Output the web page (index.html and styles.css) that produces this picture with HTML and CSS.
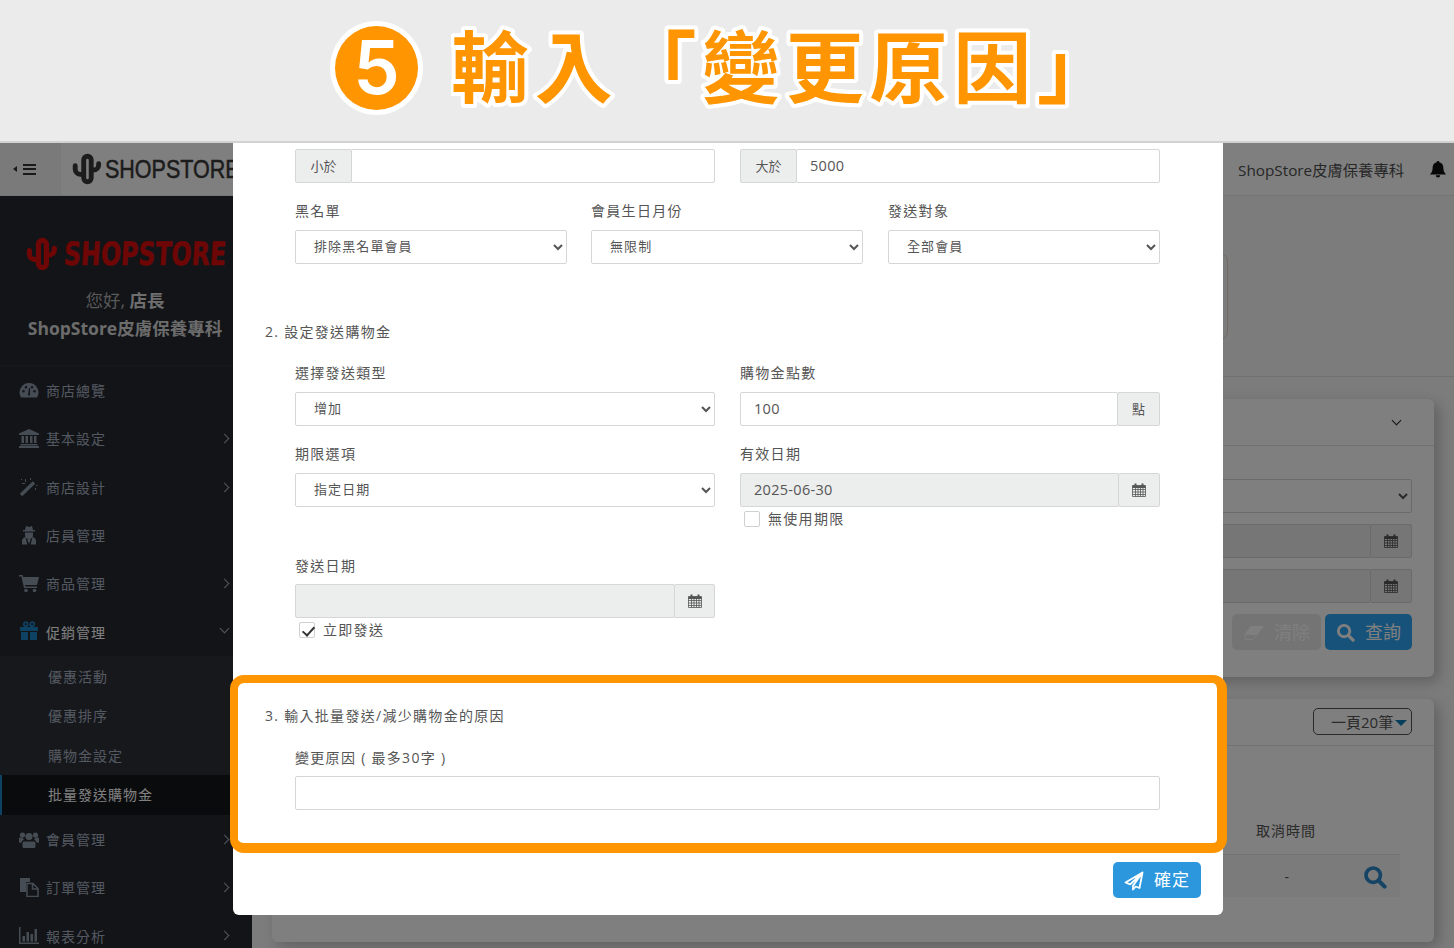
FILE: index.html
```html
<!DOCTYPE html>
<html lang="zh-Hant">
<head>
    <meta charset="UTF-8">
    <title>批量發送購物金</title>
    <link rel="stylesheet" href="styles.css">
</head>
<body>
    <svg class="defs" width="0" height="0">
        <symbol id="i-logo" viewBox="0 0 30 30"><path fill="none" stroke="currentColor" stroke-width="4.6" stroke-linecap="round" d="M3 12v3a5 5 0 0 0 5 5h3M11 6.500a3.300 3.300 0 0 1 7 0v17a3.300 3.300 0 0 1-7 0zM18 16h2a5 5 0 0 0 5-5v-1"/></symbol>
        <symbol id="i-tacho" viewBox="0 0 20 20"><path fill="currentColor" fill-rule="evenodd" d="M10 3a9.500 9.500 0 0 0-8 14.500h16A9.500 9.500 0 0 0 10 3zM4.500 12.500a1.300 1.300 0 1 0 0-2.600 1.300 1.300 0 0 0 0 2.600zM7 8.500a1.300 1.300 0 1 0 0-2.600 1.300 1.300 0 0 0 0 2.600zM13 8.500a1.300 1.300 0 1 0 0-2.600 1.300 1.300 0 0 0 0 2.600zM15.500 12.500a1.300 1.300 0 1 0 0-2.600 1.300 1.300 0 0 0 0 2.600zM9 15.500h2L11 8h-1z"/></symbol>
        <symbol id="i-bank" viewBox="0 0 20 20"><path fill="currentColor" d="M10 1 0 5.500V7h20V5.500zM2.500 8H5v7H2.500zM6.500 8H9v7H6.500zM11 8h2.500v7H11zM15 8h2.500v7H15zM1.500 16h17v1.500h-17zM0 18h20v2H0z"/></symbol>
        <symbol id="i-magic" viewBox="0 0 20 20"><path fill="none" stroke="currentColor" stroke-width="3.400" d="M2 18 15 5.500"/><path fill="currentColor" d="M6 2h1v3H6zM3 6h3v1H3zM11 1h1v2h-1zM16 11h1v2h-1zM2 2h1v1H2zM17 8h1.500v1H17z"/></symbol>
        <symbol id="i-secret" viewBox="0 0 20 20"><path fill="currentColor" d="M6 5 7 1l3 1 3-1 1 4h2v1.500H4V5zM6 7.500h8V10a4 4 0 0 1-8 0zM3 19.500V16c0-2 1.500-3.500 3.500-4l1.800 7.500zM17 19.500V16c0-2-1.500-3.500-3.500-4l-1.800 7.500zM9 13h2l.5 2-1.500 4-1.500-4z"/></symbol>
        <symbol id="i-cart" viewBox="0 0 20 20"><path fill="currentColor" d="M0 2h3.500l.6 2H20l-2 8H6l.3 1.500H18V15H5L2.400 3.500H0z"/><circle fill="currentColor" cx="7" cy="17.500" r="1.800"/><circle fill="currentColor" cx="15.500" cy="17.500" r="1.800"/></symbol>
        <symbol id="i-gift" viewBox="0 0 20 20"><path fill="currentColor" d="M1 6h18v4H1zM2 11h7v8H2zM11 11h7v8h-7z"/><circle fill="none" stroke="currentColor" stroke-width="1.800" cx="6.800" cy="3.200" r="2"/><circle fill="none" stroke="currentColor" stroke-width="1.800" cx="13.200" cy="3.200" r="2"/></symbol>
        <symbol id="i-users" viewBox="0 0 20 20"><circle fill="currentColor" cx="10" cy="7.500" r="3.600"/><circle fill="currentColor" cx="3.500" cy="6" r="2.600"/><circle fill="currentColor" cx="16.500" cy="6" r="2.600"/><path fill="currentColor" d="M5 12.500h10c1 0 1.500 1 1.500 2.500v2.500c0 .8-.7 1.500-1.500 1.500H5c-.8 0-1.500-.7-1.500-1.500V15c0-1.500.5-2.500 1.500-2.500zM0 9.500c0-.6.600-1 1-1h2.500c.4 1 1 1.700 1.500 2.300-1.600.5-2.400 1.700-2.500 3H1c-.5 0-1-.4-1-1zM20 9.500c0-.6-.6-1-1-1h-2.500c-.4 1-1 1.700-1.500 2.300 1.600.5 2.400 1.700 2.500 3H19c.5 0 1-.4 1-1z"/></symbol>
        <symbol id="i-files" viewBox="0 0 20 20"><path fill="currentColor" d="M1 1h10v4H7v10H1z"/><path fill="none" stroke="currentColor" stroke-width="1.500" d="M8 6.500h6l5 5v8H8zM13.500 6.500v5.500H19"/></symbol>
        <symbol id="i-chart" viewBox="0 0 20 20"><path fill="currentColor" d="M0 2h1.500v15.500H20V19H0zM3.500 11H6v5.500H3.500zM7.500 7H10v9.500H7.500zM11.500 9H14v7.500h-2.500zM15.500 4H18v12.500h-2.500z"/></symbol>
        <symbol id="i-bell" viewBox="0 0 20 20"><path fill="currentColor" d="M10 1a1.500 1.500 0 0 0-1.500 1.600C5.500 3.300 4 5.600 4 9c0 3.500-1 5-3 7h18c-2-2-3-3.500-3-7 0-3.400-1.500-5.700-4.500-6.400A1.500 1.500 0 0 0 10 1zM7.500 17a2.500 2.500 0 0 0 5 0z"/></symbol>
        <symbol id="i-cal" viewBox="0 0 14 14"><path fill="none" stroke="currentColor" stroke-width=".8" d="M.5 2.500h13v11H.5zM.5 6.500h13M.5 9h13M.5 11.500h13M3.500 5v8.500M6 5v8.500M8.500 5v8.500M11 5v8.500"/><path fill="currentColor" d="M.5 2.500h13V5H.5zM2.500 .5h2v3h-2zM9.500 .5h2v3h-2z"/></symbol>
        <symbol id="i-search" viewBox="0 0 20 20"><circle fill="none" stroke="currentColor" stroke-width="3" cx="8.500" cy="8.500" r="6"/><path fill="none" stroke="currentColor" stroke-width="3.400" stroke-linecap="round" d="m13.500 13.500 4.500 4.500"/></symbol>
        <symbol id="i-eraser" viewBox="0 0 20 14"><path fill="currentColor" d="M6.500 0H20l-6 8H1z"/><path fill="none" stroke="currentColor" d="M1 8.500h12L9 13.500H1z"/></symbol>
        <symbol id="i-plane" viewBox="0 0 20 20"><path fill="none" stroke="currentColor" stroke-width="1.800" stroke-linejoin="round" d="M18.500 1.500 1.500 11.500l4.700 1.900L18.500 1.500 9 14.600v3.900l2.700-3 3.800 1.500z"/></symbol>
    </svg>

    <header class="banner">
        <div class="step">5</div>
        <h1 class="banner-title"><svg width="690" height="130"><text x="0" y="92">輸入「變更原因」</text></svg></h1>
    </header>

    <div class="app">
        <aside class="sidebar">
            <div class="profile">
                <div class="side-logo">
                    <svg class="side-logo-mark"><use href="#i-logo"/></svg>
                    <span class="side-logo-text">SHOPSTORE</span>
                </div>
                <div class="hello">您好, <b>店長</b></div>
                <div class="shop-name">ShopStore皮膚保養專科</div>
            </div>
            <ul class="menu">
                <li class="menu-item"><svg class="ico"><use href="#i-tacho"/></svg>商店總覽</li>
                <li class="menu-item more"><svg class="ico"><use href="#i-bank"/></svg>基本設定</li>
                <li class="menu-item more"><svg class="ico"><use href="#i-magic"/></svg>商店設計</li>
                <li class="menu-item"><svg class="ico"><use href="#i-secret"/></svg>店員管理</li>
                <li class="menu-item more"><svg class="ico"><use href="#i-cart"/></svg>商品管理</li>
                <li class="menu-item open"><svg class="ico"><use href="#i-gift"/></svg>促銷管理</li>
                <li class="submenu">
                    <div class="sub-item">優惠活動</div>
                    <div class="sub-item">優惠排序</div>
                    <div class="sub-item">購物金設定</div>
                    <div class="sub-item active">批量發送購物金</div>
                </li>
                <li class="menu-item more"><svg class="ico"><use href="#i-users"/></svg>會員管理</li>
                <li class="menu-item more"><svg class="ico"><use href="#i-files"/></svg>訂單管理</li>
                <li class="menu-item more"><svg class="ico"><use href="#i-chart"/></svg>報表分析</li>
            </ul>
        </aside>

        <div class="page">
            <div class="topbar">
                <div class="toggle"><span class="toggle-arrow"></span><span class="toggle-bars"></span></div>
                <div class="top-logo">
                    <svg class="top-logo-mark"><use href="#i-logo"/></svg>
                    <span class="top-logo-text">SHOPSTORE</span>
                </div>
                <div class="top-shop">ShopStore皮膚保養專科</div>
                <svg class="top-bell"><use href="#i-bell"/></svg>
            </div>
            <div class="main">
                <div class="page-head"><div class="notice"></div></div>

                <section class="card card-search">
                    <div class="card-head"><span class="chevron"></span></div>
                    <div class="card-form">
                        <select class="control"><option></option></select>
                        <div class="group"><div class="control readonly"></div><span class="addon addon-cal"><svg class="cal"><use href="#i-cal"/></svg></span></div>
                        <div class="group"><div class="control readonly"></div><span class="addon addon-cal"><svg class="cal"><use href="#i-cal"/></svg></span></div>
                        <div class="card-actions">
                            <button class="btn btn-clear"><svg class="btn-eraser"><use href="#i-eraser"/></svg>清除</button>
                            <button class="btn btn-query"><svg class="btn-search"><use href="#i-search"/></svg>查詢</button>
                        </div>
                    </div>
                </section>

                <section class="card card-list">
                    <div class="card-head">
                        <div class="per-page">一頁20筆<span class="caret"></span></div>
                    </div>
                    <div class="list-title"><span class="col-time">取消時間</span></div>
                    <div class="list-row">
                        <span class="col-time">-</span>
                        <svg class="row-search"><use href="#i-search"/></svg>
                    </div>
                </section>
            </div>
        </div>

        <div class="backdrop"></div>

        <div class="modal">
            <div class="grid-2">
                <div class="group"><span class="addon addon-left">小於</span><div class="control"></div></div>
                <div class="group"><span class="addon addon-left">大於</span><div class="control">5000</div></div>
            </div>

            <div class="grid-3">
                <div class="field">
                    <label>黑名單</label>
                    <select class="control"><option>排除黑名單會員</option></select>
                </div>
                <div class="field">
                    <label>會員生日月份</label>
                    <select class="control"><option>無限制</option></select>
                </div>
                <div class="field">
                    <label>發送對象</label>
                    <select class="control"><option>全部會員</option></select>
                </div>
            </div>

            <h4 class="step-title step-two">2. 設定發送購物金</h4>

            <div class="grid-2 row-type">
                <div class="field">
                    <label>選擇發送類型</label>
                    <select class="control"><option>增加</option></select>
                </div>
                <div class="field">
                    <label>購物金點數</label>
                    <div class="group"><div class="control">100</div><span class="addon addon-point">點</span></div>
                </div>
            </div>

            <div class="grid-2 row-term">
                <div class="field">
                    <label>期限選項</label>
                    <select class="control"><option>指定日期</option></select>
                </div>
                <div class="field">
                    <label>有效日期</label>
                    <div class="group"><div class="control readonly">2025-06-30</div><span class="addon addon-cal"><svg class="cal"><use href="#i-cal"/></svg></span></div>
                    <div class="check-line"><span class="check"></span>無使用期限</div>
                </div>
            </div>

            <div class="grid-2 row-send">
                <div class="field">
                    <label>發送日期</label>
                    <div class="group"><div class="control readonly"></div><span class="addon addon-cal addon-narrow"><svg class="cal"><use href="#i-cal"/></svg></span></div>
                    <div class="check-line"><span class="check checked"></span>立即發送</div>
                </div>
            </div>

            <div class="highlight">
                <h4 class="step-title">3. 輸入批量發送/減少購物金的原因</h4>
                <div class="field reason">
                    <label>變更原因 ( 最多30字 )</label>
                    <div class="control"></div>
                </div>
            </div>

            <div class="modal-foot">
                <button class="btn btn-send"><svg class="btn-plane"><use href="#i-plane"/></svg>確定</button>
            </div>
        </div>
    </div>
</body>
</html>
```

FILE: styles.css
```css
* {
    box-sizing: border-box;
}

html, body {
    margin: 0;
    height: 948px;
    overflow: hidden;
}

body {
    font-family: "Open Sans", "Noto Sans CJK TC", sans-serif;
    font-size: 14px;
    color: #555;
    letter-spacing: 1px;
}

.defs {
    position: absolute;
}

/* top banner */
.banner {
    height: 143px;
    background: #ebebeb;
    border-bottom: 2px solid #d2d2d2;
    display: flex;
    align-items: center;
    padding-left: 330px;
}

.step {
    width: 93px;
    height: 94px;
    margin-top: -6px;
    border: 5px solid #fff;
    border-radius: 50%;
    background: #ff9500;
    color: #fff;
    font-family: Inter, sans-serif;
    font-size: 74px;
    font-weight: 600;
    line-height: 82px;
    text-align: center;
    letter-spacing: 0;
}

.banner-title {
    height: 130px;
    margin: -1px 0 0 28px;
}

.banner-title text {
    font-family: "Noto Sans CJK TC", sans-serif;
    font-size: 78px;
    font-weight: 700;
    letter-spacing: 5.7px;
    fill: #ff9500;
    stroke: #fff;
    stroke-width: 8px;
    stroke-linejoin: round;
    paint-order: stroke fill;
}

/* app shell */
.app {
    position: relative;
    display: flex;
    height: 805px;
    overflow: hidden;
    background: #f8f8f8;
}

.backdrop {
    position: absolute;
    inset: 0;
    background: rgba(0, 0, 0, .5);
}

/* sidebar */
.sidebar {
    width: 252px;
    flex: none;
    background: #25282f;
    color: #a7b1c2;
}

.profile {
    height: 223px;
    padding-top: 94px;
    border-bottom: 1px solid #2e3138;
    text-align: center;
}

.side-logo {
    display: flex;
    align-items: center;
    height: 34px;
    padding-left: 26px;
    color: #dc0c0c;
}

.side-logo-mark {
    width: 34px;
    height: 34px;
    flex: none;
}

.side-logo-text {
    margin-left: 4px;
    font-family: "DejaVu Sans", sans-serif;
    font-size: 32px;
    font-weight: 700;
    letter-spacing: 0;
    -webkit-text-stroke: .6px #dc0c0c;
    white-space: nowrap;
    transform: scaleX(.74) skewX(-5deg);
    transform-origin: left center;
}

.hello {
    margin-top: 17px;
    margin-right: 2px;
    font-size: 17.5px;
    line-height: 24px;
    letter-spacing: 0;
    color: #b0b0b0;
}

.hello b {
    font-weight: 700;
    color: #dcdcdc;
}

.shop-name {
    margin-top: 3px;
    margin-right: 2px;
    font-size: 17.5px;
    font-weight: 700;
    line-height: 26px;
    letter-spacing: 0;
    color: #d8d8d8;
}

.menu {
    list-style: none;
    margin: 0;
    padding: 0;
}

.menu-item {
    position: relative;
    display: flex;
    align-items: center;
    height: 48.3px;
    padding-left: 46px;
}

.ico {
    position: absolute;
    left: 19px;
    top: 14px;
    width: 20px;
    height: 20px;
    color: #8d99a8;
}

.more::after,
.open::after {
    content: "";
    position: absolute;
    right: 24px;
    top: 21px;
    width: 6px;
    height: 6px;
    border-top: 1px solid #a7b1c2;
    border-right: 1px solid #a7b1c2;
    transform: rotate(45deg);
}

.open {
    color: #fff;
}

.open::after {
    right: 24px;
    top: 18px;
    transform: rotate(135deg);
}

.open .ico {
    color: #1c84c6;
}

.submenu {
    padding-top: 1px;
    background: #2e3138;
}

.sub-item {
    height: 39.5px;
    line-height: 39.5px;
    padding-left: 48px;
}

.sub-item.active {
    background: #14161b;
    border-left: 2px solid #1c84c6;
    padding-left: 46px;
    color: #fff;
}

/* page behind the modal */
.page {
    flex: 1;
    min-width: 0;
}

.topbar {
    position: relative;
    display: flex;
    align-items: center;
    height: 53px;
    margin-left: -252px;
    background: #fff;
    border-bottom: 1px solid #e7eaec;
    color: #3a3a3a;
}

.toggle {
    display: flex;
    align-items: center;
    width: 61px;
    height: 52px;
    padding-left: 13px;
    background: #f4f4f4;
}

.toggle-arrow {
    width: 0;
    height: 0;
    border: 3px solid transparent;
    border-right: 4px solid #333;
    border-left: 0;
}

.toggle-bars {
    width: 13px;
    height: 11px;
    margin-left: 6px;
    border-top: 2px solid #333;
    border-bottom: 2px solid #333;
    background: linear-gradient(#333, #333) center / 100% 2px no-repeat;
}

.top-logo {
    display: flex;
    align-items: center;
    margin-left: 11px;
    color: #383838;
    overflow: hidden;
}

.top-logo-mark {
    width: 32px;
    height: 32px;
    flex: none;
}

.top-logo-text {
    margin-left: 1px;
    font-family: "Liberation Sans", sans-serif;
    font-size: 25px;
    letter-spacing: 0;
    -webkit-text-stroke: .5px #383838;
    transform: scaleX(.86);
    transform-origin: left center;
}

.top-shop {
    margin-left: auto;
    font-size: 15.3px;
    letter-spacing: 0;
    color: #4e4e4e;
}

.top-bell {
    width: 18px;
    height: 18px;
    margin: 0 7px 0 25px;
    color: #111;
}

.main {
    padding: 0 20px;
}

.page-head {
    height: 181px;
    margin: 0 -20px;
    padding: 57px 226px 0 0;
    border-bottom: 1px solid #e0e0e0;
}

.notice {
    height: 87px;
    border: 1px solid #e6cfc8;
    border-radius: 8px;
}

.card {
    background: #fff;
    border-radius: 6px;
    box-shadow: 5px 5px 14px rgba(0, 0, 0, .22);
}

.card-search {
    height: 278px;
    margin-top: 22px;
}

.card-list {
    height: 243px;
    margin-top: 22px;
}

.card-head {
    display: flex;
    align-items: center;
    justify-content: flex-end;
    height: 47px;
    padding-right: 22px;
    border-bottom: 1px solid #e4e4e4;
}

.chevron {
    width: 7px;
    height: 7px;
    margin: -4px 12px 0 0;
    border-right: 1px solid #222;
    border-bottom: 1px solid #222;
    transform: rotate(45deg);
}

.card-form {
    display: flex;
    flex-direction: column;
    gap: 11px;
    padding: 33px 22px 0;
}

.card-actions {
    display: flex;
    justify-content: flex-end;
    gap: 4px;
}

.per-page {
    width: 99px;
    height: 27px;
    padding-left: 17px;
    border: 1px solid #555;
    border-radius: 5px;
    font-size: 15px;
    line-height: 24px;
    letter-spacing: 0;
    color: #555;
    margin-top: -1px;
    display: flex;
    align-items: center;
}

.caret {
    margin: 2px 0 0 2px;
    border: 6px solid transparent;
    border-top: 6px solid #0f7cb5;
    border-bottom: 0;
}

.list-title {
    height: 108px;
    padding-top: 75px;
    padding-right: 84px;
    display: flex;
    justify-content: flex-end;
    margin-right: 34px;
    font-size: 14px;
    line-height: 20px;
}

.list-row {
    position: relative;
    display: flex;
    align-items: center;
    justify-content: flex-end;
    height: 43px;
    margin-right: 34px;
    padding-right: 110px;
    background: #f6f6f6;
    border-top: 1px solid #e4e4e4;
}

.row-search {
    position: absolute;
    right: 13px;
    top: 10px;
    width: 24px;
    height: 24px;
    color: #2c88c8;
}

/* modal */
.modal {
    position: absolute;
    top: 0;
    left: 233px;
    width: 990px;
    height: 772px;
    padding: 6px 63px 0 62px;
    background: #fff;
    border-radius: 0 0 6px 6px;
    letter-spacing: 1.3px;
}

.grid-2 {
    display: grid;
    grid-template-columns: 420px 420px;
    column-gap: 25px;
}

.grid-3 {
    display: grid;
    grid-template-columns: 272px 272px 272px;
    column-gap: 24px;
    margin-top: 18px;
}

.grid-3 .field:last-child {
    margin: 0 -1px 0 1px;
}

.row-type {
    margin-top: 21px;
}

.row-term {
    margin-top: 18px;
}

.row-send {
    margin-top: 29px;
}

.field label {
    display: block;
    height: 20px;
    line-height: 20px;
    margin-bottom: 9px;
}

.row-send label {
    margin-bottom: 8px;
}

.control {
    display: block;
    width: 100%;
    height: 34px;
    padding: 0 13px;
    background: #fff;
    border: 1px solid #d5d6d8;
    border-radius: 2px;
    font: inherit;
    font-size: 14.5px;
    line-height: 31px;
    letter-spacing: .3px;
    color: #555;
}

select.control {
    padding: 0 13px 2px 14px;
    font-size: 13px;
    letter-spacing: 1.1px;
}

.readonly {
    background: #eceded;
}

.group {
    display: flex;
}

.group .control {
    flex: 1;
    min-width: 0;
}

.addon {
    display: flex;
    flex: none;
    align-items: center;
    justify-content: center;
    height: 34px;
    padding-bottom: 2px;
    background: #eceded;
    border: 1px solid #d5d6d8;
    border-radius: 2px;
    font-size: 13px;
    letter-spacing: 0;
}

.addon-left {
    width: 57px;
    margin-right: -1px;
}

.addon-point {
    width: 43px;
    margin-left: -1px;
}

.addon-cal {
    width: 42px;
    margin-left: -1px;
    padding-bottom: 0;
}

.addon-narrow {
    width: 41px;
}

.cal {
    width: 14px;
    height: 14px;
    color: #555;
}

.step-title {
    margin: 0;
    font-size: 14px;
    font-weight: 400;
    line-height: 20px;
    color: #555;
}

.step-two {
    margin: 58px 0 0 -30px;
}

.check-line {
    display: flex;
    align-items: center;
    height: 16px;
    margin-top: 4px;
    padding-left: 4px;
    line-height: 14px;
}

.check {
    position: relative;
    width: 16px;
    height: 16px;
    margin-right: 8px;
    border: 1px solid #d0d0d0;
    border-radius: 2px;
}

.checked::after {
    content: "";
    position: absolute;
    left: 5px;
    top: 1px;
    width: 5px;
    height: 10px;
    border-right: 2.5px solid #333;
    border-bottom: 2.5px solid #333;
    transform: rotate(42deg);
}

.highlight {
    height: 178px;
    margin: 37px -67px 0 -65px;
    padding: 23px 57px 0 57px;
    border-style: solid;
    border-color: #ff9500;
    border-width: 8px 10px 10px 8px;
    border-radius: 14px;
    background: #fff;
}

.highlight .step-title {
    margin-left: -30px;
}

.reason {
    margin-top: 22px;
}

.reason label {
    margin-bottom: 8px;
}

.modal-foot {
    display: flex;
    justify-content: flex-end;
    margin: 9px -41px 0 0;
}

.btn {
    display: flex;
    align-items: center;
    height: 36px;
    padding-bottom: 4px;
    border: 0;
    border-radius: 5px;
    font: inherit;
    color: #fff;
}

.btn svg {
    margin-top: 4px;
}

.btn-send {
    width: 88px;
    padding-left: 11px;
    background: #2d97dd;
    font-size: 17px;
    letter-spacing: 1px;
}

.btn-plane {
    width: 20px;
    height: 20px;
    margin-right: 10px;
}

.btn-clear {
    width: 89px;
    padding-left: 12px;
    background: #e8e8e8;
    font-size: 18px;
    letter-spacing: 0;
}

.btn-eraser {
    width: 20px;
    height: 14px;
    margin-right: 10px;
}

.btn-query {
    width: 87px;
    padding-left: 11px;
    background: #2ea4f4;
    font-size: 18px;
    letter-spacing: 0;
}

.btn-search {
    width: 19px;
    height: 19px;
    margin-right: 10px;
}
```
